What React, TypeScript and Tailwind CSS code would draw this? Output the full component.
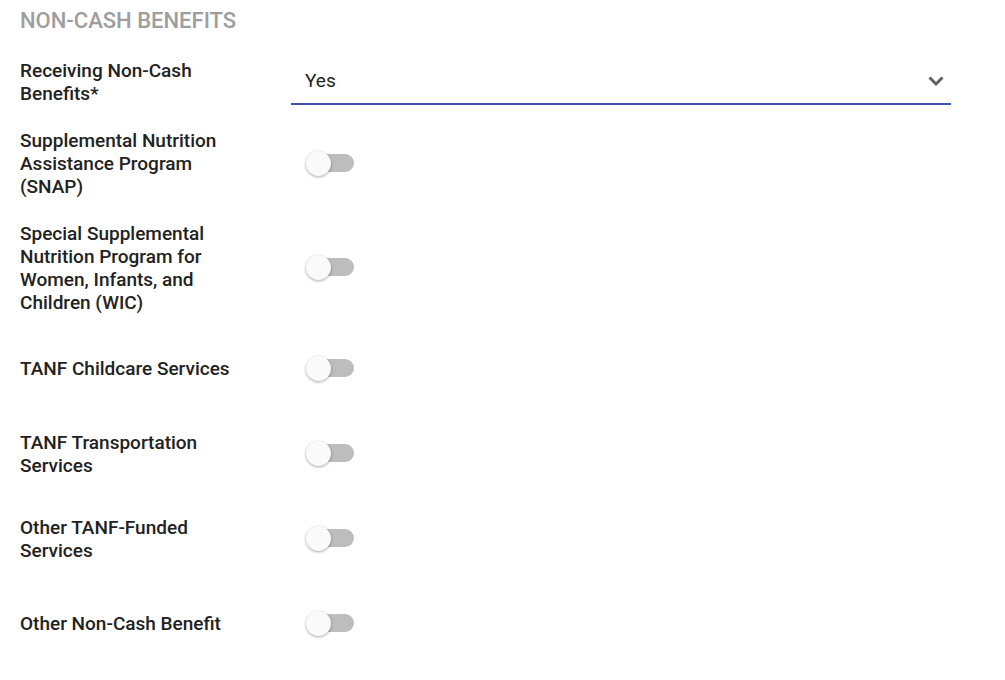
import { ReactNode } from 'react'

const programs = [
  'Supplemental Nutrition Assistance Program (SNAP)',
  'Special Supplemental Nutrition Program for Women, Infants, and Children (WIC)',
  'TANF Childcare Services',
  'TANF Transportation Services',
  'Other TANF-Funded Services',
  'Other Non-Cash Benefit',
]

function Toggle() {
  return (
    <div className="relative -mt-[2px] h-[28px] w-[52px]">
      <div className="absolute left-[5px] top-[5px] h-[18px] w-[46px] rounded-full bg-[#bdbdbd]" />
      <div className="absolute left-[3px] top-[2px] h-[25px] w-[25px] rounded-full bg-[#fafafa] shadow-[0_1px_3px_rgba(0,0,0,0.35)]" />
    </div>
  )
}

function Row({ label, children, minH }: { label: string; children: ReactNode; minH: string }) {
  return (
    <div className={`flex items-center ${minH}`}>
      <div className="w-[226px] shrink-0 text-[19px] leading-[23px] font-medium text-[#222]">{label}</div>
      <div className="ml-[45px] flex-1">{children}</div>
    </div>
  )
}

export default function App() {
  return (
    <div className="min-h-[680px] bg-white px-5 pt-[8px] font-['Roboto',sans-serif]">
      <h2 className="text-[22px] leading-[26px] font-medium uppercase text-[#9e9e9e]">Non-Cash Benefits</h2>
      <div className="mt-[25px] flex w-[931px] flex-col gap-6">
        <Row label="Receiving Non-Cash Benefits*" minH="min-h-[46px]">
          <div className="flex h-[45px] items-center justify-between border-b-2 border-[#3f51b5] pr-[3px] pl-[14px]">
            <span className="text-[19px] text-[#222]">Yes</span>
            <svg width="24" height="24" viewBox="0 0 24 24" className="text-[#616161]">
              <path d="M5.5 8.5l6.5 6.5 6.5-6.5" fill="none" stroke="currentColor" strokeWidth="3" />
            </svg>
          </div>
        </Row>
        {programs.map((p) => (
          <Row key={p} label={p} minH="min-h-[61px]">
            <div className="ml-[12px]">
              <Toggle />
            </div>
          </Row>
        ))}
      </div>
    </div>
  )
}
